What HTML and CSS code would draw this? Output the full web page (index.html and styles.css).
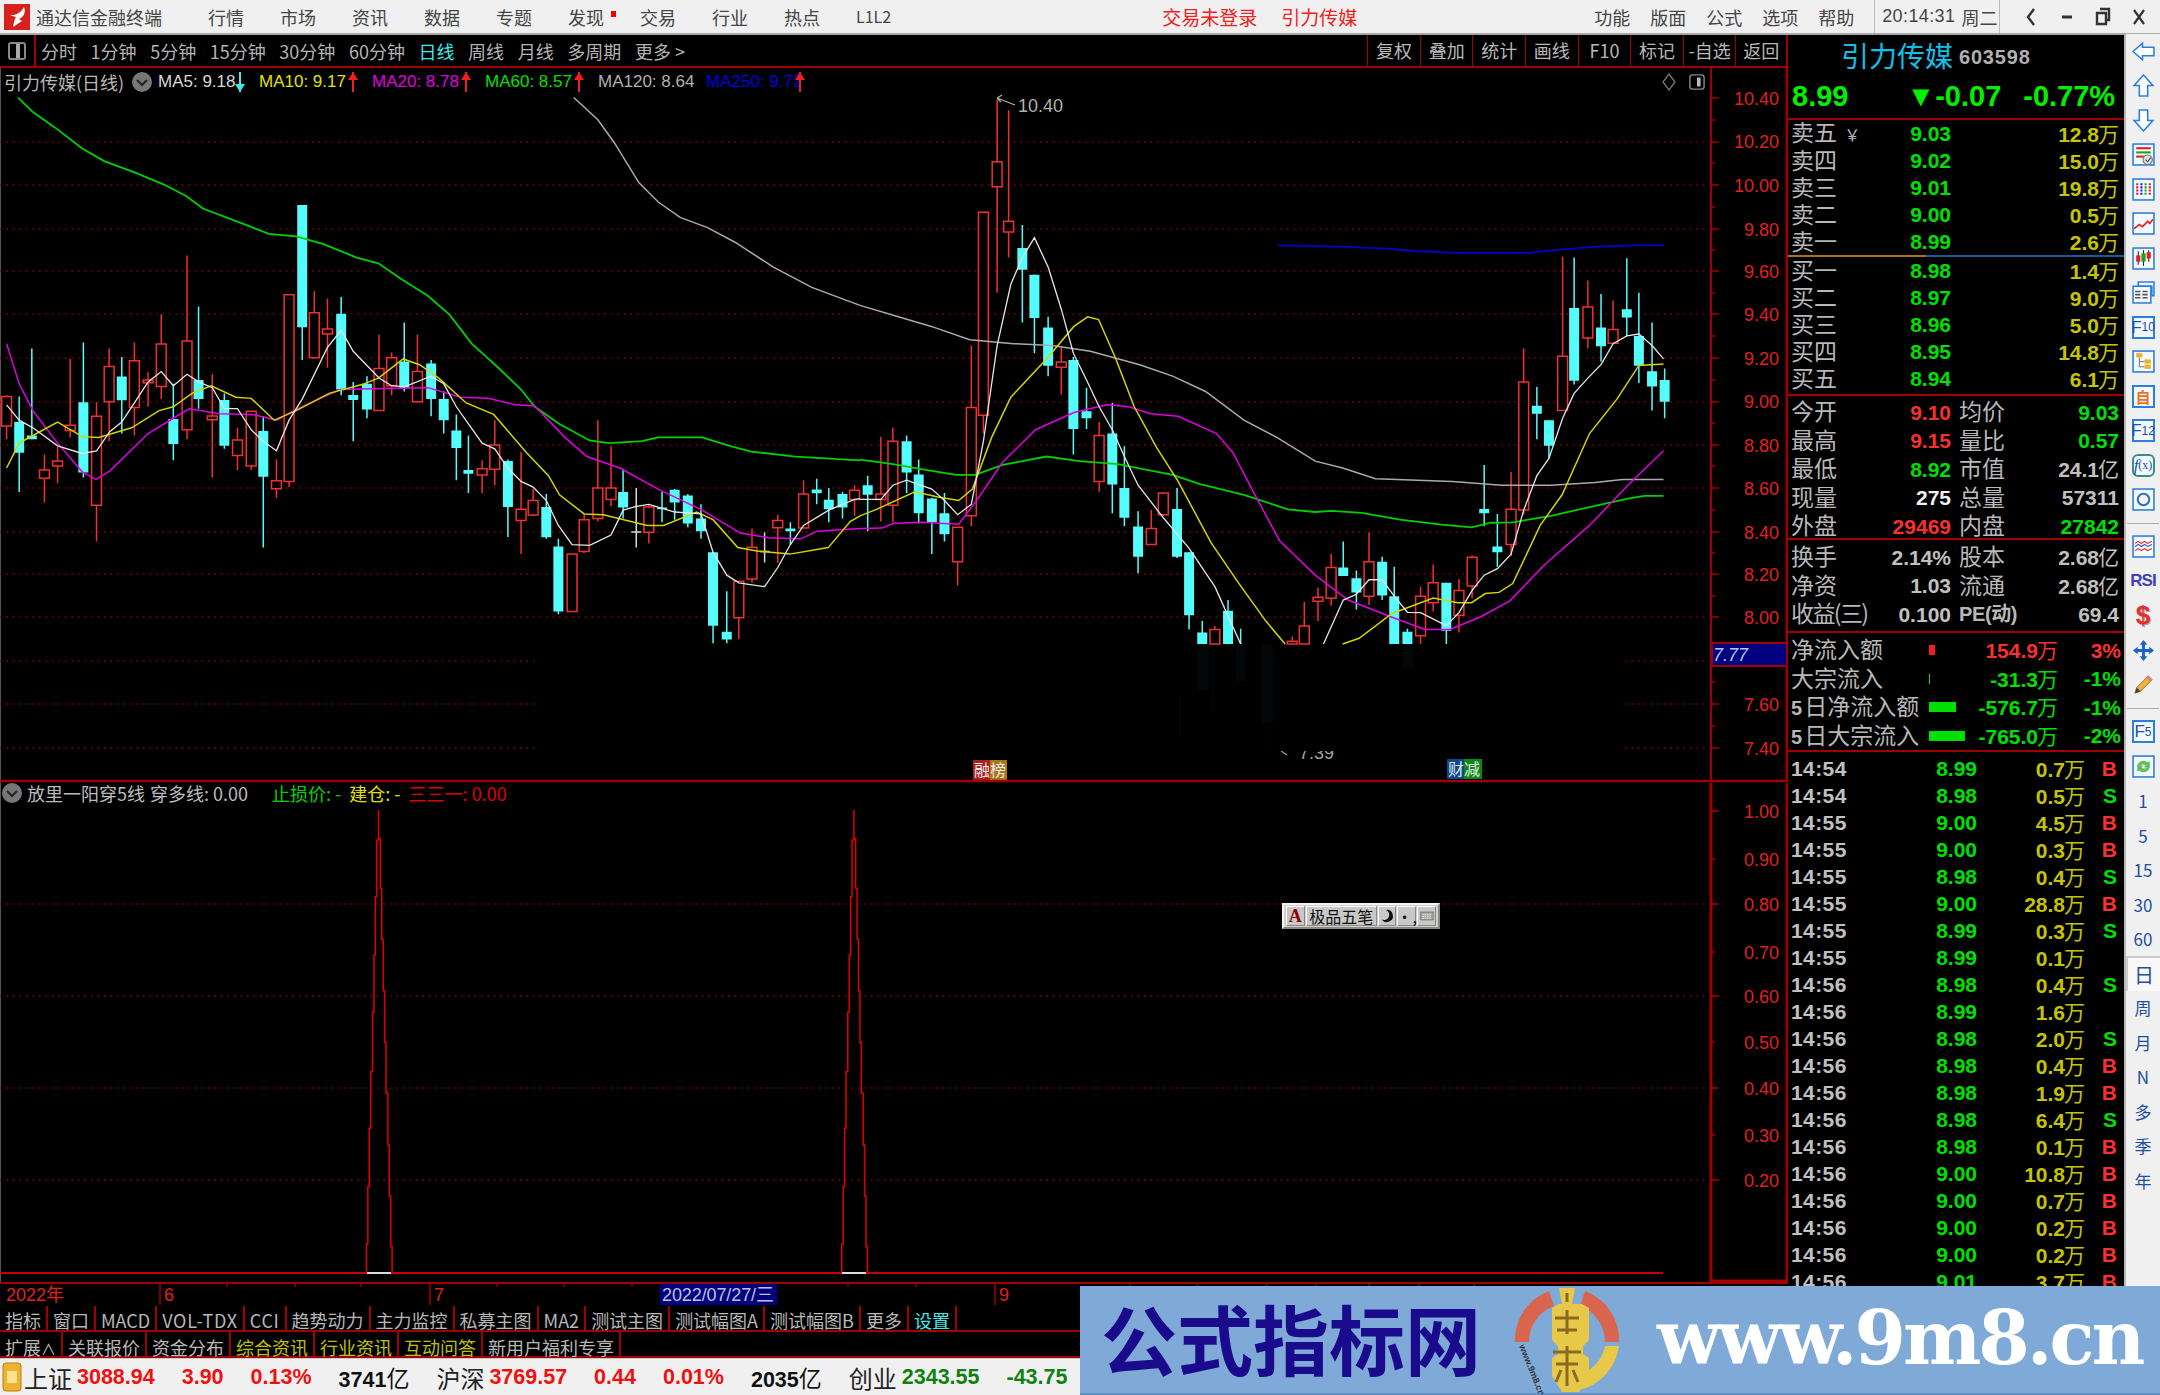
FILE: index.html
```html
<!DOCTYPE html>
<html lang="zh">
<head>
<meta charset="utf-8">
<title>通达信金融终端</title>
<link rel="stylesheet" href="styles.css">
</head>
<body>
<div class="app">
  <header class="titlebar">
    <svg class="logo" viewBox="0 0 26 26"><rect width="26" height="26" fill="#d8201c"/><path d="M20 3c2 5 0 10-5 12l3 2-9 6c1-4 1-7 3-10l-7-2c6 1 12-2 15-8z" fill="#fff"/></svg>
    <span class="appname">通达信金融终端</span>
    <nav class="menu">
      <span>行情</span><span>市场</span><span>资讯</span><span>数据</span><span>专题</span><span class="has-dot">发现<i class="dot"></i></span><span>交易</span><span>行业</span><span>热点</span><span class="l12">L1L2</span>
    </nav>
    <div class="title-center"><span>交易未登录</span><span>引力传媒</span></div>
    <nav class="menu menu-r"><span>功能</span><span>版面</span><span>公式</span><span>选项</span><span>帮助</span></nav>
    <div class="clock"><span>20:14:31</span><span class="week">周二</span></div>
    <div class="winbtns">
      <svg viewBox="0 0 16 22"><path d="M11 3L5 11l6 8" fill="none" stroke="#333" stroke-width="2.4"/></svg>
      <svg viewBox="0 0 16 22"><path d="M3 11h10" stroke="#333" stroke-width="3"/></svg>
      <svg viewBox="0 0 16 22"><path d="M5 3h9v11h-3M2 7h9v11H2z" fill="none" stroke="#333" stroke-width="2.4"/></svg>
      <svg viewBox="0 0 16 22"><path d="M3 4l10 14M13 4L3 18" stroke="#333" stroke-width="2.2"/></svg>
    </div>
  </header>

  <main class="main">
    <section class="left">
      <div class="toolbar">
        <div class="toggle"><span class="toggle-ico"></span></div>
        <div class="periods">
          <span>分时</span><span>1分钟</span><span>5分钟</span><span>15分钟</span><span>30分钟</span><span>60分钟</span><span class="on">日线</span><span>周线</span><span>月线</span><span>多周期</span><span>更多 &gt;</span>
        </div>
        <div class="tools">
          <span>复权</span><span>叠加</span><span>统计</span><span>画线</span><span>F10</span><span>标记</span><span>-自选</span><span>返回</span>
        </div>
      </div>

      <div class="chartwrap">
        <svg class="chart" width="1788" height="1238" viewBox="0 68 1788 1238">
          <path class="edge" d="M.5 68V1282"/>
          <path class="grid" d="M0 142H1711M0 185H1711M0 229H1711M0 271H1711M0 314H1711M0 358H1711M0 402H1711M0 445H1711M0 488H1711M0 532H1711M0 574H1711M0 617H1711M0 661H1711M0 704H1711M0 748H1711M0 904H1711M0 996H1711M0 1088H1711M0 1180H1711"/>

          <g transform="translate(0 70) scale(.5485 .3827)">
            <path class="wr" d="M12 850V965M81 1005V1130M105 985V1080M128 755V960M176 868V1232M199 728V970M245 712V955M270 790V880M294 638V860M341 485V965M387 795V1065M433 935V1045M458 892V1045M504 1017V1118M527 587V1090M573 578V752M597 597V778M691 692V890M714 738V850M761 692V868M879 1020V1105M902 915V1085M950 998V1265M972 1095V1165M1043 1265V1415M1065 1160V1262M1090 915V1180M1114 983V1140M1183 1138V1237M1347 1335V1487M1371 1198V1340M1418 1162V1288M1465 1072V1197M1558 1085V1165"/>
            <path class="wc" d="M35 853V1103M58 728V965M152 712V1065M222 750V950M316 820V1020M362 618V885M409 845V990M480 905V1248M551 353V758M622 593V850M644 815V970M669 800V910M737 660V840M786 758V905M809 840V950M832 900V1072M854 955V1105M926 1018V1220M996 1108V1225M1018 1225V1422M1136 1042V1172M1207 1102V1182M1230 1095V1175M1254 1108V1195M1278 1135V1225M1300 1260V1498M1325 1362V1498M1441 1182V1240M1489 1068V1135M1511 1092V1182M1536 1102V1172"/>
            <path class="wd" d="M1160 1092V1248M1394 1208V1287M1151 1207H1169M1385 1258H1403"/>
            <path class="br" d="M3 853h18v77h-18zM72 1045h18v22h-18zM96 1022h18v13h-18zM119 928h18v14h-18zM167 905h18v232h-18zM190 775h18v92h-18zM236 760h18v122h-18zM261 810h18v7h-18zM285 716h18v111h-18zM332 708h18v232h-18zM378 904h18v10h-18zM424 967h18v40h-18zM449 892h18v143h-18zM495 1073h18v21h-18zM518 587h18v488h-18zM564 634h18v118h-18zM588 677h18v13h-18zM682 780h18v110h-18zM705 752h18v73h-18zM752 788h18v79h-18zM870 1042h18v16h-18zM893 980h18v63h-18zM941 1148h18v29h-18zM963 1125h18v38h-18zM1034 1265h18v150h-18zM1056 1175h18v83h-18zM1081 1092h18v80h-18zM1105 1092h18v30h-18zM1174 1142h18v66h-18zM1338 1336h18v95h-18zM1362 1247h18v83h-18zM1409 1177h18v19h-18zM1456 1108h18v89h-18zM1549 1098h18v24h-18z"/>
            <path class="bc" d="M35 920V1000M58 955V965M152 868V1052M222 801V863M316 912V977M362 810V860M409 862V982M480 943V1063M551 353V672M622 637V835M644 849V862M669 820V887M737 762V830M786 767V860M809 860V915M832 942V988M854 1045V1055M926 1022V1142M996 1142V1221M1018 1245V1415M1136 1103V1143M1207 1143V1148M1230 1097V1130M1254 1112V1185M1278 1172V1205M1300 1260V1452M1325 1468V1488M1441 1198V1205M1489 1096V1106M1511 1123V1148M1536 1108V1143"/>
            <path class="ma60" d="M33 72L60 110 100 150 150 205 190 238 250 270 300 300 340 330 370 362 440 400 490 428 540 435 590 455 650 490 690 505 730 545 780 590 820 640 860 715 910 780 950 835 975 880 1020 925 1075 968 1110 975 1170 970 1200 960 1280 960 1330 982 1370 997 1450 1010 1568 1020"/>
            <path class="ma120" d="M1046 72L1090 130 1120 190 1165 295 1200 345 1240 385 1290 412 1340 450 1410 515 1480 568 1568 615"/>
            <path class="ma20" d="M12 715L35 820 60 890 105 975 150 1050 175 1070 200 1048 270 950 316 910 345 885 400 898 460 900 505 915 535 890 620 835 700 832 780 830 840 855 890 858 940 875 975 878 1030 960 1070 1010 1130 1040 1200 1095 1280 1150 1350 1210 1400 1222 1460 1225 1490 1205 1568 1198"/>
            <path class="ma10" d="M12 1040L35 975 60 955 105 920 150 958 180 960 240 935 290 890 316 880 350 845 385 825 430 855 458 858 500 915 540 890 600 845 660 822 690 805 735 755 765 770 800 805 850 870 900 900 960 1000 1000 1060 1020 1110 1065 1160 1100 1162 1180 1190 1210 1190 1270 1155 1300 1175 1345 1248 1380 1257 1440 1265 1510 1248 1550 1180 1568 1165"/>
            <path class="ma5" d="M12 875L35 915 60 935 105 982 150 1002 176 995 200 945 222 920 245 870 270 815 294 788 316 825 341 795 362 815 387 830 409 885 433 885 458 940 480 970 504 995 527 915 551 860 597 725 622 680 644 735 691 805 714 825 737 828 786 800 809 820 832 880 854 925 879 975 902 990 926 1040 950 1075 972 1090 996 1125 1018 1190 1043 1240 1075 1242 1114 1215 1136 1150 1160 1140 1183 1135 1230 1155 1278 1160 1300 1260 1325 1320 1347 1340 1394 1350 1418 1300 1441 1240 1465 1190 1511 1150 1558 1122 1568 1120"/>
          </g>

          <g transform="translate(860 70) scale(.5485 .3827)">
            <path class="wr" d="M38 958V1180M60 935V1182M178 1195V1347M203 720V1192M225 372V950M250 78V582M271 105V490M367 725V848M436 920V1102M531 1150V1240M553 1105V1165M647 1452V1500M788 1480V1500M810 1390V1500M835 1352V1440M859 1265V1400M928 1208V1398M1022 1350V1500M1045 1292V1415M1092 1330V1470M1116 1268V1380M1187 1050V1270M1210 728V1162M1281 488V890M1327 550V728M1373 602V715"/>
            <path class="wc" d="M14 1060V1205M85 955V1105M107 1018V1185M131 1118V1265M154 1105V1232M296 405V660M318 535V740M343 645V800M389 750V1005M413 830V938M460 870V1158M482 983V1192M507 1153V1315M578 1092V1275M600 1260V1462M624 1440V1500M671 1385V1500M694 1460V1500M881 1232V1322M905 1308V1410M952 1272V1385M974 1298V1500M998 1460V1500M1069 1340V1500M1138 1032V1192M1162 1160V1298M1234 828V965M1256 915V1015M1302 490V822M1351 585V762M1398 492V695M1420 582V818M1444 660V890M1467 780V910"/>
            <path class="br" d="M29 1108h18v14h-18zM51 970h18v167h-18zM169 1195h18v90h-18zM194 882h18v283h-18zM216 372h18v530h-18zM241 240h18v65h-18zM262 395h18v28h-18zM358 763h18v14h-18zM427 955h18v120h-18zM522 1198h18v42h-18zM544 1105h18v57h-18zM638 1462h18v38h-18zM779 1493h18v7h-18zM801 1453h18v47h-18zM826 1378h18v10h-18zM850 1300h18v80h-18zM919 1285h18v90h-18zM1013 1375h18v103h-18zM1036 1340h18v52h-18zM1083 1360h18v65h-18zM1107 1273h18v75h-18zM1178 1148h18v92h-18zM1201 815h18v335h-18zM1272 748h18v142h-18zM1318 619h18v81h-18zM1364 678h18v36h-18z"/>
            <path class="bc" d="M14 1085V1110M85 970V1052M107 1057V1158M131 1120V1182M154 1158V1213M296 465V522M318 535V648M343 673V773M389 758V938M413 892V910M460 950V1083M482 1092V1170M507 1193V1272M578 1147V1272M600 1260V1425M624 1470V1500M671 1413V1500M881 1300V1322M905 1328V1365M952 1285V1373M974 1375V1500M998 1468V1500M1069 1340V1465M1138 1147V1158M1162 1245V1260M1234 877V898M1256 915V982M1302 622V812M1351 673V722M1398 625V647M1420 695V773M1444 787V827M1467 810V867"/>
            <path class="ma250" d="M762 458L890 462 960 467 1010 473 1090 478 1220 478 1270 470 1340 462 1410 458 1465 458"/>
            <path class="ma120" d="M0 615L70 645 130 670 200 705 280 715 350 720 420 735 510 770 570 800 630 840 700 915 760 960 830 1022 880 1040 940 1068 1080 1075 1170 1085 1260 1085 1340 1078 1390 1070 1465 1070"/>
            <path class="ma60" d="M0 1018L60 1030 120 1045 175 1058 210 1058 260 1032 340 1010 400 1022 470 1030 570 1058 620 1082 700 1110 780 1148 830 1155 860 1152 915 1157 985 1175 1060 1188 1115 1195 1150 1183 1190 1182 1260 1165 1330 1142 1400 1120 1430 1113 1465 1113"/>
            <path class="ma20" d="M0 1198L40 1197 60 1185 110 1182 180 1187 215 1120 260 1025 320 940 390 895 450 875 490 880 530 898 580 905 650 950 680 1000 720 1110 765 1230 830 1320 890 1385 970 1430 1030 1462 1075 1462 1130 1430 1185 1387 1250 1290 1330 1190 1400 1085 1465 995"/>
            <path class="ma10" d="M0 1165L30 1148 100 1102 140 1115 180 1125 205 1095 240 960 275 855 340 755 390 670 415 645 435 652 465 750 500 880 540 985 580 1075 640 1235 690 1340 740 1440 775 1500M880 1500L910 1485 970 1420 1045 1380 1090 1392 1115 1392 1140 1368 1165 1365 1190 1342 1240 1190 1280 1110 1330 950 1380 860 1420 772 1465 768"/>
            <path class="ma5" d="M0 1122L38 1122 60 1085 85 1072 131 1095 154 1125 178 1162 203 1135 225 970 250 720 275 560 296 490 318 438 343 515 367 625 389 740 413 810 436 880 460 940 482 1010 507 1085 553 1170 600 1250 647 1350 694 1500M845 1500L881 1385 905 1370 928 1332 952 1332 974 1375 998 1417 1022 1418 1069 1452 1092 1418 1116 1360 1138 1320 1162 1303 1187 1265 1210 1150 1234 1060 1256 1015 1281 910 1302 845 1327 805 1351 770 1373 715 1398 695 1420 690 1444 720 1465 755"/>
          </g>

          <text class="hl faintt" x="1299" y="759">7.39</text>
          <path class="hlarrow faintp" d="M1281 751l6 4"/>
          <rect class="mask" x="537" y="645" width="1084" height="106"/>
          <path class="faint" d="M1198 645h10v45h-10zM1236 645h10v36h-10zM1262 645h10v78h-10zM1403 645h10v22h-10zM1213 645v70M1270 723v28M1180 696v40"/>
          <text class="hl" x="1018" y="112">10.40</text>
          <path class="hlarrow" d="M997 98l18 7M997 98l5-3M997 98l4 4"/>

          <rect class="bdg bl" x="973" y="760" width="17" height="20"/><rect class="bdg br2" x="990" y="760" width="17" height="20"/>
          <text class="bdgt" x="974" y="776">融榜</text>
          <rect class="bdg bb" x="1447" y="759" width="17" height="20"/><rect class="bdg bg2" x="1464" y="759" width="18" height="20"/>
          <text class="bdgt" x="1448" y="775">财减</text>

          <path class="div" d="M0 781H1788"/>
          <path class="axis" d="M1711 68V781"/>
          <path class="axis2" d="M1711 783V1281H1787V783M1787 68V781"/>
          <path class="tick" d="M1711 98h8M1711 142h8M1711 185h8M1711 229h8M1711 271h8M1711 314h8M1711 358h8M1711 402h8M1711 445h8M1711 488h8M1711 532h8M1711 574h8M1711 617h8M1711 704h8M1711 748h8M1711 120h4M1711 163h4M1711 207h4M1711 250h4M1711 293h4M1711 336h4M1711 380h4M1711 423h4M1711 466h4M1711 510h4M1711 553h4M1711 596h4M1711 682h4M1711 726h4M1711 811h8M1711 904h8M1711 996h8M1711 1088h8M1711 1180h8M1711 859h4M1711 952h4M1711 1042h4M1711 1135h4"/>
          <g class="ax">
            <text x="1779" y="105">10.40</text><text x="1779" y="148">10.20</text><text x="1779" y="192">10.00</text><text x="1779" y="236">9.80</text><text x="1779" y="278">9.60</text><text x="1779" y="321">9.40</text><text x="1779" y="365">9.20</text><text x="1779" y="408">9.00</text><text x="1779" y="452">8.80</text><text x="1779" y="495">8.60</text><text x="1779" y="539">8.40</text><text x="1779" y="581">8.20</text><text x="1779" y="624">8.00</text><text x="1779" y="711">7.60</text><text x="1779" y="755">7.40</text>
            <text x="1779" y="818">1.00</text><text x="1779" y="866">0.90</text><text x="1779" y="911">0.80</text><text x="1779" y="959">0.70</text><text x="1779" y="1003">0.60</text><text x="1779" y="1049">0.50</text><text x="1779" y="1095">0.40</text><text x="1779" y="1142">0.30</text><text x="1779" y="1187">0.20</text>
          </g>
          <rect class="cur" x="1712" y="643" width="75" height="23"/>
          <text class="curt" x="1713" y="661">7.77</text>

          <g transform="translate(340 780) scale(.3571 .3333)">
            <g id="pk">
              <path class="pk" d="M108 90V180H103V350H99V525H95V697H91V875H86V1045H82V1220H78V1392H74V1478M108 90V175H113V325H117V478H121V632H125V787H129V940H134V1095H138V1248H142V1400H146V1478"/>
            </g>
            <use href="#pk" x="1331"/>
          </g>
          <path class="base" d="M0 1273H1663"/>
          <path class="basew" d="M367 1273H391M842 1273H866"/>

          <path class="dateline" d="M0 1283H1788"/>
          <path class="datetick" d="M160 1283V1305M430 1283V1305M995 1283V1305M227 1283v4M295 1283v4M361 1283v4M497 1283v4M564 1283v4M632 1283v4M848 1283v4M916 1283v4M1130 1283v4M1197 1283v4M1267 1283v4M1316 1283v4M1369 1283v4M1419 1283v4M1474 1283v4"/>
          <text class="dt" x="6" y="1301">2022年</text>
          <text class="dt" x="164" y="1301">6</text>
          <text class="dt" x="434" y="1301">7</text>
          <text class="dt" x="999" y="1301">9</text>
          <rect class="dbox" x="660" y="1284" width="117" height="21"/>
          <text class="dbt" x="662" y="1301">2022/07/27/三</text>
        </svg>

        <div class="legend legend-main">
          <span class="lg-name">引力传媒(日线)</span>
          <svg class="chev" viewBox="0 0 20 20"><circle cx="10" cy="10" r="10" fill="#777"/><path d="M5 8l5 5 5-5" fill="none" stroke="#222" stroke-width="2"/></svg>
          <span class="c-w">MA5: 9.18</span><i class="arr ad"></i>
          <span class="c-y">MA10: 9.17</span><i class="arr au"></i>
          <span class="c-m">MA20: 8.78</span><i class="arr au"></i>
          <span class="c-g">MA60: 8.57</span><i class="arr au"></i>
          <span class="c-s">MA120: 8.64</span>
          <span class="c-b">MA250: 9.72</span><i class="arr au"></i>
        </div>
        <div class="viewicons">
          <svg viewBox="0 0 16 20"><path d="M8 2l6 8-6 8-6-8z" fill="none" stroke="#777" stroke-width="1.3"/></svg>
          <svg viewBox="0 0 18 20"><rect x="1" y="2" width="16" height="16" rx="3" fill="none" stroke="#888" stroke-width="1.6"/><rect x="9" y="5" width="4" height="10" fill="#bbb"/></svg>
        </div>
        <div class="legend legend-sub">
          <svg class="chev" viewBox="0 0 20 20"><circle cx="10" cy="10" r="10" fill="#777"/><path d="M5 8l5 5 5-5" fill="none" stroke="#222" stroke-width="2"/></svg>
          <span class="lg-s">放里一阳穿5线</span><span class="lg-s">穿多线: 0.00</span>
          <span class="c-g2">止损价: -</span><span class="c-y2">建仓: -</span><span class="c-r2">三三一: 0.00</span>
        </div>
        <div class="ime">
          <span class="ime-a">A</span><span class="ime-b">极品五笔</span>
          <span class="ime-c"><svg viewBox="0 0 16 16"><path d="M7 1a7 7 0 1 1-5 11a6 6 0 0 0 5-11z" fill="#111"/></svg></span>
          <span class="ime-c">·,</span>
          <span class="ime-c"><svg viewBox="0 0 18 16"><path d="M1 3h16v10H1z" fill="#aaa" stroke="#666"/><path d="M3 6h12M3 8.500h12M3 11h12" stroke="#eee" stroke-dasharray="2 1"/></svg></span>
        </div>
      </div>

      <div class="tabs">
        <span>指标</span><span>窗口</span><span>MACD</span><span class="tl">VOL-TDX</span><span class="tl">CCI</span><span>趋势动力</span><span>主力监控</span><span>私募主图</span><span>MA2</span><span>测试主图</span><span>测试幅图A</span><span>测试幅图B</span><span>更多</span><span class="t-c">设置</span>
      </div>
      <div class="tabs tabs2">
        <span>扩展<small>∧</small></span><span>关联报价</span><span>资金分布</span><span class="t-y">综合资讯</span><span class="t-y">行业资讯</span><span class="t-y">互动问答</span><span>新用户福利专享</span>
      </div>
    </section>

    <aside class="quote">
      <div class="q-head"><span class="q-name">引力传媒</span><span class="q-code">603598</span></div>
      <div class="q-price"><span>8.99</span><span class="q-chg">▼-0.07</span><span>-0.77%</span></div>

      <div class="book">
        <div class="ob"><span class="l">卖五 <small>￥</small></span><b class="g">9.03</b><b class="v">12.8<em>万</em></b></div>
        <div class="ob"><span class="l">卖四</span><b class="g">9.02</b><b class="v">15.0<em>万</em></b></div>
        <div class="ob"><span class="l">卖三</span><b class="g">9.01</b><b class="v">19.8<em>万</em></b></div>
        <div class="ob"><span class="l">卖二</span><b class="g">9.00</b><b class="v">0.5<em>万</em></b></div>
        <div class="ob"><span class="l">卖一</span><b class="g">8.99</b><b class="v">2.6<em>万</em></b></div>
      </div>
      <div class="midline"><i></i><i></i></div>
      <div class="book book-b">
        <div class="ob"><span class="l">买一</span><b class="g">8.98</b><b class="v">1.4<em>万</em></b></div>
        <div class="ob"><span class="l">买二</span><b class="g">8.97</b><b class="v">9.0<em>万</em></b></div>
        <div class="ob"><span class="l">买三</span><b class="g">8.96</b><b class="v">5.0<em>万</em></b></div>
        <div class="ob"><span class="l">买四</span><b class="g">8.95</b><b class="v">14.8<em>万</em></b></div>
        <div class="ob"><span class="l">买五</span><b class="g">8.94</b><b class="v">6.1<em>万</em></b></div>
      </div>

      <div class="stats s1">
        <div class="st"><span class="l">今开</span><b class="r">9.10</b><span class="l l2">均价</span><b class="g">9.03</b></div>
        <div class="st"><span class="l">最高</span><b class="r">9.15</b><span class="l l2">量比</span><b class="g">0.57</b></div>
        <div class="st"><span class="l">最低</span><b class="g">8.92</b><span class="l l2">市值</span><b class="n">24.1<em>亿</em></b></div>
        <div class="st"><span class="l">现量</span><b class="w">275</b><span class="l l2">总量</span><b class="n">57311</b></div>
        <div class="st"><span class="l">外盘</span><b class="r">29469</b><span class="l l2">内盘</span><b class="g">27842</b></div>
      </div>
      <div class="stats s2">
        <div class="st"><span class="l">换手</span><b class="n">2.14%</b><span class="l l2">股本</span><b class="n">2.68<em>亿</em></b></div>
        <div class="st"><span class="l">净资</span><b class="n">1.03</b><span class="l l2">流通</span><b class="n">2.68<em>亿</em></b></div>
        <div class="st"><span class="l nar">收益(三)</span><b class="n">0.100</b><span class="l l2 pe">PE(动)</span><b class="n">69.4</b></div>
      </div>
      <div class="flows">
        <div class="fl"><span class="l">净流入额</span><span class="barc"><i class="bar b-r" style="width:6px"></i></span><b class="r">154.9<em>万</em></b><b class="r">3%</b></div>
        <div class="fl"><span class="l">大宗流入</span><span class="barc"><i class="bar b-g" style="width:1px"></i></span><b class="g">-31.3<em>万</em></b><b class="g">-1%</b></div>
        <div class="fl"><span class="l"><b class="n5">5</b>日净流入额</span><span class="barc"><i class="bar b-g" style="width:27px"></i></span><b class="g">-576.7<em>万</em></b><b class="g">-1%</b></div>
        <div class="fl"><span class="l"><b class="n5">5</b>日大宗流入</span><span class="barc"><i class="bar b-g" style="width:36px"></i></span><b class="g">-765.0<em>万</em></b><b class="g">-2%</b></div>
      </div>
      <div class="trades">
        <div class="tr"><b class="n">14:54</b><b class="g">8.99</b><b class="v">0.7<em>万</em></b><b class="r">B</b></div>
        <div class="tr"><b class="n">14:54</b><b class="g">8.98</b><b class="v">0.5<em>万</em></b><b class="g">S</b></div>
        <div class="tr"><b class="n">14:55</b><b class="g">9.00</b><b class="v">4.5<em>万</em></b><b class="r">B</b></div>
        <div class="tr"><b class="n">14:55</b><b class="g">9.00</b><b class="v">0.3<em>万</em></b><b class="r">B</b></div>
        <div class="tr"><b class="n">14:55</b><b class="g">8.98</b><b class="v">0.4<em>万</em></b><b class="g">S</b></div>
        <div class="tr"><b class="n">14:55</b><b class="g">9.00</b><b class="v">28.8<em>万</em></b><b class="r">B</b></div>
        <div class="tr"><b class="n">14:55</b><b class="g">8.99</b><b class="v">0.3<em>万</em></b><b class="g">S</b></div>
        <div class="tr"><b class="n">14:55</b><b class="g">8.99</b><b class="v">0.1<em>万</em></b><b></b></div>
        <div class="tr"><b class="n">14:56</b><b class="g">8.98</b><b class="v">0.4<em>万</em></b><b class="g">S</b></div>
        <div class="tr"><b class="n">14:56</b><b class="g">8.99</b><b class="v">1.6<em>万</em></b><b></b></div>
        <div class="tr"><b class="n">14:56</b><b class="g">8.98</b><b class="v">2.0<em>万</em></b><b class="g">S</b></div>
        <div class="tr"><b class="n">14:56</b><b class="g">8.98</b><b class="v">0.4<em>万</em></b><b class="r">B</b></div>
        <div class="tr"><b class="n">14:56</b><b class="g">8.98</b><b class="v">1.9<em>万</em></b><b class="r">B</b></div>
        <div class="tr"><b class="n">14:56</b><b class="g">8.98</b><b class="v">6.4<em>万</em></b><b class="g">S</b></div>
        <div class="tr"><b class="n">14:56</b><b class="g">8.98</b><b class="v">0.1<em>万</em></b><b class="r">B</b></div>
        <div class="tr"><b class="n">14:56</b><b class="g">9.00</b><b class="v">10.8<em>万</em></b><b class="r">B</b></div>
        <div class="tr"><b class="n">14:56</b><b class="g">9.00</b><b class="v">0.7<em>万</em></b><b class="r">B</b></div>
        <div class="tr"><b class="n">14:56</b><b class="g">9.00</b><b class="v">0.2<em>万</em></b><b class="r">B</b></div>
        <div class="tr"><b class="n">14:56</b><b class="g">9.00</b><b class="v">0.2<em>万</em></b><b class="r">B</b></div>
        <div class="tr"><b class="n">14:56</b><b class="g">9.01</b><b class="v">3.7<em>万</em></b><b class="r">B</b></div>
      </div>
    </aside>

    <aside class="side">
      <div class="sb"><svg viewBox="0 0 22 22"><path class="ol" d="M1 11l9-8v4h11v8H10v4z"/></svg></div>
      <div class="sb"><svg viewBox="0 0 22 22"><path class="ol" d="M11 1l9 10h-5v10H7V11H2z"/></svg></div>
      <div class="sb"><svg viewBox="0 0 22 22"><path class="ol" d="M11 21l9-10h-5V1H7v10H2z"/></svg></div>
      <div class="sb"><svg viewBox="0 0 22 22"><rect class="bx" x="1" y="1" width="20" height="20"/><path d="M4 5h14" stroke="#e02020" stroke-width="2"/><path d="M4 9h14" stroke="#20a020" stroke-width="2"/><path d="M4 13h8" stroke="#e02020" stroke-width="2"/><circle cx="15" cy="16" r="4.500" fill="#ddd" stroke="#777"/><path d="M13 16l2 2 3-4" fill="none" stroke="#444"/></svg></div>
      <div class="sb"><svg viewBox="0 0 22 22"><rect class="bx" x="1" y="1" width="20" height="20"/><path d="M5 5v12" stroke="#e02020" stroke-width="2" stroke-dasharray="2 1"/><path d="M9 5v12" stroke="#2020c0" stroke-width="2" stroke-dasharray="2 1"/><path d="M13 5v12" stroke="#20a020" stroke-width="2" stroke-dasharray="2 1"/><path d="M17 5v12" stroke="#e02020" stroke-width="2" stroke-dasharray="2 1"/></svg></div>
      <div class="sb"><svg viewBox="0 0 22 22"><rect class="bx" x="1" y="1" width="20" height="20"/><path d="M2 16l5-4 3 2 5-5 2 2 3-4" fill="none" stroke="#e02020" stroke-width="1.500"/></svg></div>
      <div class="sb"><svg viewBox="0 0 22 22"><rect class="bx" x="1" y="1" width="20" height="20"/><path d="M6 4v13" stroke="#222"/><rect x="4" y="8" width="4" height="6" fill="#e02020"/><path d="M11 3v15" stroke="#222"/><rect x="9" y="6" width="4" height="8" fill="#20a020"/><path d="M16 3v11" stroke="#222"/><rect x="14" y="5" width="4" height="6" fill="#e02020"/></svg></div>
      <div class="sb"><svg viewBox="0 0 22 22"><path class="bx" d="M6 1h15v13h-2V5H6z"/><rect class="bx" x="1" y="5" width="17" height="16"/><path d="M3 10h5M10 10h5M3 13h5M10 13h5M3 16h5M10 16h5" stroke="#555" stroke-width="1.500"/></svg></div>
      <div class="sb"><span class="fk">F<small>10</small></span></div>
      <div class="sb"><svg viewBox="0 0 22 22"><rect class="bx" x="1" y="1" width="20" height="20"/><path d="M7 7v9h5M7 11h5" fill="none" stroke="#777"/><rect x="4" y="3" width="6" height="4" fill="#f0b020"/><rect x="12" y="9" width="6" height="4" fill="#f0b020"/><rect x="12" y="14" width="6" height="4" fill="#f0b020"/></svg></div>
      <div class="sb"><span class="fk fk-o">自</span></div>
      <div class="sb"><span class="fk">F<small>12</small></span></div>
      <div class="sb"><span class="fk fk-t"><i>f</i><small>(x)</small></span></div>
      <div class="sb"><svg viewBox="0 0 22 22"><rect class="bx" x="1" y="1" width="20" height="20"/><circle cx="11" cy="11" r="5.500" fill="none" stroke="#3070c0" stroke-width="2"/></svg></div>
      <div class="sep"></div>
      <div class="sb"><svg viewBox="0 0 22 22"><rect class="bx" x="1" y="1" width="20" height="20"/><path d="M3 8l3-2 3 2 3-2 3 2 4-2" fill="none" stroke="#e02020"/><path d="M3 11l3-2 3 2 3-2 3 2 4-2" fill="none" stroke="#4040d0"/><path d="M3 15l3-2 3 2 3-2 3 2 4-2" fill="none" stroke="#e02020"/></svg></div>
      <div class="sb"><span class="rsi">RSI</span></div>
      <div class="sb"><span class="dollar">$</span></div>
      <div class="sb"><svg viewBox="0 0 24 24"><path d="M12 1l4 5h-2.500v4.500H18V8l5 4-5 4v-2.500h-4.500V18H16l-4 5-4-5h2.500v-4.500H6V16l-5-4 5-4v2.500h4.500V6H8z" fill="#1a60d0"/></svg></div>
      <div class="sb"><svg viewBox="0 0 24 24"><path d="M3 21l2-6L17 3l4 4L9 19z" fill="#f0b040" stroke="#a07030"/><path d="M17 3l4 4-2 2-4-4z" fill="#e08070"/><path d="M3 21l2-6 4 4z" fill="#444"/></svg></div>
      <div class="sep sep2"></div>
      <div class="sb"><span class="fk">F<small>5</small></span></div>
      <div class="sb"><svg viewBox="0 0 22 22"><rect class="bx" x="1" y="1" width="20" height="20"/><path d="M5 11a6 6 0 0 1 10-4l2-1v6h-6l2-2a4 4 0 0 0-6 1z" fill="#60c060"/><path d="M17 11a6 6 0 0 1-10 4l-2 1v-6h6l-2 2a4 4 0 0 0 6-1z" fill="#60c060"/></svg></div>
      <div class="sb sn">1</div><div class="sb sn">5</div><div class="sb sn">15</div><div class="sb sn">30</div><div class="sb sn">60</div>
      <div class="sb sn sel">日</div><div class="sb sn">周</div><div class="sb sn">月</div><div class="sb sn">N</div><div class="sb sn">多</div><div class="sb sn">季</div><div class="sb sn">年</div>
    </aside>
  </main>

  <footer class="status">
    <svg class="st-ico" viewBox="0 0 20 30"><rect x="1" y="1" width="18" height="28" rx="3" fill="#f0b030" stroke="#c08010"/><rect x="5" y="9" width="10" height="12" fill="#ffe090"/></svg>
    <span class="s-l">上证</span><span class="s-r">3088.94</span><span class="s-r">3.90</span><span class="s-r">0.13%</span><span class="s-k">3741<em>亿</em></span>
    <span class="s-l">沪深</span><span class="s-r">3769.57</span><span class="s-r">0.44</span><span class="s-r">0.01%</span><span class="s-k">2035<em>亿</em></span>
    <span class="s-l">创业</span><span class="s-g">2343.55</span><span class="s-g">-43.75</span>
  </footer>

  <div class="banner">
    <span class="b-cn">公式指标网</span>
    <svg class="b-logo" viewBox="0 0 108 108">
      <path d="M2 56A52 52 0 0 1 36 5L41 20A38 38 0 0 0 16 56z" fill="#d9654e"/>
      <path d="M106 56A52 52 0 0 0 72 5L67 20A38 38 0 0 1 92 56z" fill="#d9654e"/>
      <path d="M106 60A52 52 0 0 1 66 104L62 90A38 38 0 0 0 92 60z" fill="#e8c848"/>
      <path d="M46 2h16l-3 16h10l7 4v32l-6 6v8l6 4v18l-10 16H49L39 90V72l6-4v-8l-6-6V22l7-4h3z" fill="#e8c848"/>
      <path d="M54 7v9M42 32h24M44 44h20M54 24v24M40 66h28M43 78h22M54 60v40M48 84l-5 12M60 84l5 12" stroke="#8a6a20" stroke-width="3" fill="none"/>
      <text class="b-url" transform="translate(6 60) rotate(68)">www.9m8.cn</text>
    </svg>
    <span class="b-en">www.9m8.cn</span>
  </div>
</div>
</body>
</html>
```

FILE: styles.css
```css
*{box-sizing:border-box;margin:0;padding:0}
html,body{width:2160px;height:1395px;overflow:hidden;background:#f0f0f0}
body{font-family:"Liberation Sans","Noto Sans CJK SC",sans-serif;font-size:18px}
.app{position:relative;width:2160px;height:1395px;display:flex;flex-direction:column;overflow:hidden}

/* title bar */
.titlebar{height:35px;flex:none;display:flex;align-items:center;background:#f0f0f0;border-bottom:2px solid #a8a8a8;color:#333;padding-left:4px;font-family:"Noto Sans CJK SC",sans-serif;font-size:18px}
.logo{width:26px;height:26px;flex:none}
.appname{margin-left:6px;color:#444}
.menu{display:flex;gap:36px;margin-left:46px;color:#444}
.menu span{white-space:nowrap}
.l12{font-size:16px}
.has-dot{position:relative}
.dot{position:absolute;left:43px;top:7px;width:5px;height:6px;background:#f00000}
.title-center{margin-left:271px;display:flex;gap:24px;color:#f02020;font-size:19px}
.menu-r{margin-left:237px;gap:20px}
.clock{margin-left:20px;display:flex;align-items:center;height:33px;border-left:1px solid #bbb;border-right:1px solid #bbb;padding:0 0 0 7px;width:126px;color:#444;font-size:18px;white-space:nowrap}
.clock span:first-child{font-family:"Liberation Sans",sans-serif;letter-spacing:.4px}
.week{margin-left:6px}
.winbtns{display:flex;align-items:center;gap:20px;padding-left:23px}
.winbtns svg{width:16px;height:22px}

/* main */
.main{height:1323px;flex:none;display:flex;background:#000}
.left{width:1788px;flex:none;display:flex;flex-direction:column;background:#000}
.toolbar{height:33px;flex:none;display:flex;align-items:stretch;border-bottom:2px solid #a00000;color:#b4b4b4;font-family:"Noto Sans CJK SC",sans-serif;font-size:18px}
.toggle{width:36px;flex:none;border-right:2px solid #a00000;display:flex;align-items:center;justify-content:center}
.toggle-ico{width:18px;height:18px;border:2px solid #888;border-radius:3px;position:relative;background:linear-gradient(90deg,#000 45%,#aaa 45%,#aaa 75%,#000 75%)}
.periods{display:flex;align-items:center;gap:13.600px;padding-left:5px;flex:1;white-space:nowrap}
.periods .on{color:#40e8e8}
.tools{display:flex;flex:none}
.tools span{width:52.600px;border-left:1px solid #a00000;text-align:center;line-height:31px;white-space:nowrap;color:#b8b8b8}
.tools span:last-child{border-right:2px solid #a00000}

/* chart */
.chartwrap{position:relative;height:1238px;flex:none}
.chart{display:block}
.chart path{vector-effect:non-scaling-stroke;fill:none}
.edge{stroke:#555;stroke-width:1}
.grid{stroke:#8c0000;stroke-width:1.500;stroke-dasharray:1.500 5}
.wr{stroke:#f03030;stroke-width:1.500}
.wc{stroke:#54fcfc;stroke-width:1.500}
.wd{stroke:#d8d8d8;stroke-width:1.500}
.chart .br{stroke:#f03030;stroke-width:1.500;fill:#000}
.bc{stroke:#54fcfc;stroke-width:10}
.ma5{stroke:#e6e6e6;stroke-width:1.300}
.ma10{stroke:#d4d400;stroke-width:1.500}
.ma20{stroke:#e000e0;stroke-width:1.500}
.ma60{stroke:#00d000;stroke-width:1.800}
.ma120{stroke:#aaa;stroke-width:1.500}
.ma250{stroke:#0000d0;stroke-width:1.800}
.mask{fill:#000}
.chart .faint{fill:#030707;stroke:#040606;stroke-width:1}
.hl{fill:#b0b0b0;font-size:18px}
.faintt{fill:#a0a0a0}
.hlarrow{stroke:#b0b0b0;stroke-width:1.300}
.faintp{stroke:#999}
.bdg{stroke:none}
.bl{fill:#a82020}
.br2{fill:#a87818}
.bb{fill:#0a4a8c}
.bg2{fill:#0a8a14}
.bdgt{fill:#e8e8e8;font-family:"Noto Sans CJK SC",sans-serif;font-size:16px}
.div{stroke:#a00000;stroke-width:2.500}
.axis{stroke:#a00000;stroke-width:2}
.axis2{stroke:#a00000;stroke-width:3}
.tick{stroke:#a00000;stroke-width:1.500}
.ax text{fill:#e02020;font-size:18px;text-anchor:end}
.cur{fill:#000080;stroke:#a00000;stroke-width:2}
.curt{fill:#b8c8f0;font-size:18px;font-style:italic}
.pk{stroke:#e00000;stroke-width:1.500}
.base{stroke:#c80000;stroke-width:2}
.basew{stroke:#ddd;stroke-width:2}
.dateline{stroke:#a00000;stroke-width:2}
.datetick{stroke:#a00000;stroke-width:1.500}
.dt{fill:#e02020;font-size:18px}
.dbox{fill:#000080}
.dbt{fill:#c0c0d8;font-size:18px;letter-spacing:-.1px}

.legend{position:absolute;left:0;display:flex;align-items:center;white-space:nowrap;font-size:17px;color:#ccc}
.legend-main{top:1px;height:26px;padding-left:4px}
.lg-name{font-family:"Noto Sans CJK SC","Liberation Sans",sans-serif;font-size:18px;color:#b8b8b8;width:128px}
.chev{width:20px;height:20px;flex:none}
.c-w{margin-left:6px;color:#d8d8d8;width:78px}
.c-y{color:#e0e000;width:90px}
.c-m{color:#e000e0;width:90px}
.c-g{color:#00e000;width:90px}
.c-s{color:#b0b0b0;width:108px}
.c-b{color:#0000e0;width:90px}
.arr{display:block;width:2px;height:20px;margin-left:3px;margin-right:18px;position:relative}
.arr::after{content:"";position:absolute;left:-4px;border-left:5px solid transparent;border-right:5px solid transparent}
.ad{background:#40e8e8}
.ad::after{bottom:0;border-top:8px solid #40e8e8}
.au{background:#f02020}
.au::after{top:0;border-bottom:8px solid #f02020}
.viewicons{position:absolute;top:2px;left:1661px;display:flex;gap:12px;align-items:center;height:24px}
.viewicons svg{width:16px;height:20px}
.legend-sub{top:713px;height:24px;padding-left:2px;font-family:"Noto Sans CJK SC","Liberation Sans",sans-serif;font-size:18px}
.lg-s{margin-left:5px;color:#bbb}
.c-g2{margin-left:24px;color:#00d800}
.c-y2{margin-left:8px;color:#e0e000}
.c-r2{margin-left:8px;color:#e00000}
.ime{position:absolute;left:1282px;top:835px;width:158px;height:26px;display:flex;align-items:center;gap:1px;background:#d4d0c8;border:2px solid #f4f4f4;border-right-color:#888;border-bottom-color:#888;padding:0 2px;font-family:"Noto Sans CJK SC",sans-serif;font-size:16px;color:#111}
.ime span{height:20px;display:flex;align-items:center;justify-content:center;background:#c8c8c8;border:1px solid #888;border-top-color:#fff;border-left-color:#fff}
.ime-a{width:19px;font-family:"Liberation Serif",serif;font-weight:bold;font-size:18px;color:#900000}
.ime-b{width:72px;white-space:nowrap}
.ime-c{width:19px}
.ime-c svg{width:14px;height:14px}

/* tabs */
.tabs{height:26px;flex:none;display:flex;border-bottom:2px solid #a00000;font-family:"Noto Sans CJK SC","Liberation Sans",sans-serif;font-size:18px;color:#b8b8b8}
.tabs span{padding:0 5px;line-height:28px;border-right:2px solid #a00000;white-space:nowrap}
.tabs2 span{line-height:31px}
.tabs small{font-size:15px}
.tl{letter-spacing:.7px}
.t-c{color:#40e8e8}
.t-y{color:#c0c000}

/* quote panel */
.quote{width:336px;flex:none;background:#000;overflow:hidden;font-family:"Liberation Sans","Noto Sans CJK SC",sans-serif;font-size:21px;color:#c0c0c0}
.quote b{line-height:1}
.quote em{font-style:normal;font-weight:normal;font-family:"Noto Sans CJK SC",sans-serif;font-size:21px;line-height:1;margin-left:-1px}
.l{font-family:"Noto Sans CJK SC",sans-serif;font-size:23px;line-height:26px;margin-top:-4px;color:#b8b8b8;white-space:nowrap}
.ob .l{margin-top:-3px}
.l small{font-size:16px;margin-left:2px}
.g{color:#00e000;text-align:right}
.r{color:#f83030;text-align:right}
.w{color:#f0f0f0;text-align:right}
.n{color:#c0c0c0;text-align:right}
.v{color:#c4c400;text-align:right}
.q-head{height:31px;display:flex;align-items:center;padding-left:53px;padding-top:8px}
.q-name{font-family:"Noto Sans CJK SC",sans-serif;font-size:28px;line-height:32px;color:#10c0e8;flex:none}
.q-code{margin-left:6px;margin-top:5px;font-weight:bold;font-size:20px;color:#b0b0b0;letter-spacing:.8px}
.q-price{height:54px;display:flex;align-items:center;padding:9px 5px 0 4px;border-bottom:2px solid #a00000;color:#00f000;font-weight:bold;font-size:29px;white-space:nowrap}
.q-chg{margin-left:58px;margin-right:22px}
.book{padding:0 5px 0 3px}
.book-b{padding-bottom:2px;border-bottom:2px solid #a00000}
.ob{height:27px;display:grid;grid-template-columns:100px 60px 1fr;align-items:center;white-space:nowrap}
.midline{height:2px;display:flex}
.midline i{display:block;height:2px;background:#1a5a96;flex:1}
.midline i:first-child{flex:none;width:138px;background:#a87020}
.stats{padding:1px 5px 0 3px;border-bottom:2px solid #a00000}
.s1{height:144px;padding-top:2px}
.s2{height:93px;padding-top:3px}
.st{height:28.500px;display:grid;grid-template-columns:80px 80px 68px 1fr;align-items:center;white-space:nowrap}
.l2{padding-left:8px}
.nar{letter-spacing:-1.600px}
.pe{font-family:"Liberation Sans","Noto Sans CJK SC",sans-serif;font-size:20px;font-weight:bold;letter-spacing:-.4px;color:#b8b8b8;margin-top:0}
.flows{height:119px;padding:3px 3px 0 3px;border-bottom:2px solid #a00000}
.fl{height:28.500px;display:grid;grid-template-columns:138px 40px 89px 1fr;align-items:center;white-space:nowrap}
.n5{font-family:"Liberation Sans",sans-serif;font-size:20px;margin-right:2px}
.barc{display:flex;align-items:center}
.bar{display:block;height:10px}
.b-r{background:#f02020}
.b-g{background:#00e000}
.trades{padding:3px 7px 0 3px}
.tr{height:27px;display:grid;grid-template-columns:100px 86px 108px 1fr;align-items:center;white-space:nowrap}
.tr .n{text-align:left;letter-spacing:.4px}

/* side strip */
.side{flex:1;background:#f0f0f0;border-left:2px solid #b8b8b8;display:flex;flex-direction:column;align-items:center;margin-top:-1px}
.sb{height:34.500px;width:100%;flex:none;display:flex;align-items:center;justify-content:center;color:#1f4ea0}
.sb svg{width:23px;height:23px}
.ol{fill:#fff;stroke:#2a80e0;stroke-width:1.500}
.bx{fill:#f4f8ff;stroke:#2a80e0;stroke-width:1.500}
.sep{height:12.500px;flex:none;width:32px;position:relative}
.sep::after{content:"";position:absolute;left:0;right:0;top:6px;height:1px;background:#aaa}
.fk{width:23px;height:23px;border:2px solid #2a80e0;background:#f4f8ff;display:flex;align-items:center;justify-content:center;font-size:17px;line-height:1;color:#2050a8}
.fk small{font-size:12px}
.fk-o{font-family:"Noto Sans CJK SC",sans-serif;font-size:15px;font-weight:bold;color:#f07020}
.fk-t{border-color:#309090;border-radius:6px;font-family:"Liberation Serif",serif;color:#2050a8}
.rsi{font-size:17px;font-weight:bold;color:#4040c0;letter-spacing:-1px}
.dollar{font-size:26px;font-weight:bold;color:#e03030;text-shadow:1px 1px 1px #999}
.sn{font-family:"Noto Sans CJK SC","Liberation Sans",sans-serif;font-size:17px}
.sel{background:#f8f8f8;border-top:2px solid #ccc;border-left:2px solid #ccc;font-size:20px}

/* status bar */
.status{flex:1;display:flex;align-items:center;gap:27px;padding-left:2px;background:#f0f0f0;border-top:1px solid #ccc;color:#111;font-size:21.500px;white-space:nowrap}
.st-ico{width:20px;height:30px;flex:none;margin-right:-25px}
.s-l{font-family:"Noto Sans CJK SC",sans-serif;font-size:24px;color:#222;margin-right:-22px}
.s-r{color:#f01010;font-weight:bold}
.s-g{color:#108010;font-weight:bold}
.s-k{font-weight:bold;color:#111}
.s-k em{font-style:normal;font-weight:normal;font-family:"Noto Sans CJK SC",sans-serif;font-size:23px}

/* watermark banner */
.banner{position:absolute;left:1080px;top:1286px;width:1080px;height:109px;background:#7faad7;border-bottom:2px solid #5f8fc0;display:flex;align-items:center}
.b-cn{margin-left:21px;margin-bottom:6px;font-family:"Noto Sans CJK SC",sans-serif;font-weight:bold;font-size:76px;line-height:1;color:#1a0a8c;white-space:nowrap}
.b-logo{width:108px;height:108px;flex:none;margin-left:32px}
.b-url{font-size:9px;fill:#333;font-weight:bold}
.b-en{margin-left:36px;margin-bottom:4px;font-family:"DejaVu Serif",serif;font-weight:bold;font-size:74px;letter-spacing:-3px;line-height:1;color:#fff;white-space:nowrap}
```
